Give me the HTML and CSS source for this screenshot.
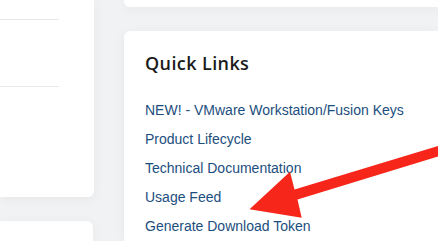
FILE: index.html
```html
<!DOCTYPE html>
<html lang="en">
<head>
    <meta charset="UTF-8">
    <title>Quick Links</title>
    <link rel="stylesheet" href="styles.css">
</head>
<body>
    <div class="page">
        <div class="column left">
            <div class="card card-top-left">
                <div class="rule rule-first"></div>
                <div class="rule rule-second"></div>
            </div>
            <div class="card card-bottom-left"></div>
        </div>
        <div class="column right">
            <div class="card card-top-right"></div>
            <div class="card quick-links">
                <h2>Quick Links</h2>
                <ul class="links">
                    <li><a href="#">NEW! - VMware Workstation/Fusion Keys</a></li>
                    <li><a href="#">Product Lifecycle</a></li>
                    <li><a href="#">Technical Documentation</a></li>
                    <li><a href="#">Usage Feed</a></li>
                    <li><a href="#">Generate Download Token</a></li>
                </ul>
            </div>
        </div>
    </div>

    <!-- annotation arrow drawn over the page -->
    <svg class="arrow" width="438" height="241" viewBox="0 0 438 241">
        <polygon points="440,145.5 440,156 297.5,199.5 301.7,217.7 249.5,209.3 290,171.7 294.5,189.5" fill="#f7261a"/>
    </svg>
</body>
</html>
```

FILE: styles.css
```css
/* Reset */
* {
    margin: 0;
    padding: 0;
    box-sizing: border-box;
}

body {
    background-color: #f1f2f3;
    font-family: 'Liberation Sans', Arial, sans-serif;
    width: 438px;
    height: 241px;
    overflow: hidden;
}

.page {
    display: grid;
    grid-template-columns: 94px 1fr;
    column-gap: 30px;
}

.column {
    display: flex;
    flex-direction: column;
    gap: 24px;
}

.card {
    background-color: #fff;
    box-shadow: 0 2px 12px rgba(0, 0, 0, 0.05);
}

/* Left column */
.card-top-left {
    height: 197px;
    border-radius: 0 0 6px 0;
    padding-top: 19px;
}

.rule {
    width: 59px;
    height: 1px;
    background-color: #e9e9e9;
}

.rule-second {
    margin-top: 66px;
}

.card-bottom-left {
    width: 93px;
    height: 20px;
    border-radius: 0 6px 0 0;
}

/* Right column */
.card-top-right {
    height: 7px;
    border-radius: 0 0 0 6px;
}

.quick-links {
    height: 210px;
    border-radius: 6px 0 0 0;
    padding: 20px 21px 0;
}

.quick-links h2 {
    font-family: 'Open Sans', sans-serif;
    font-size: 18px;
    font-weight: 600;
    letter-spacing: 0.4px;
    color: #1b1b1b;
    line-height: 24px;
    margin-bottom: 21px;
}

.links {
    list-style: none;
}

.links li {
    font-size: 14px;
    line-height: 29px;
}

.links a {
    color: #1c4e7e;
    text-decoration: none;
}

.arrow {
    position: absolute;
    top: 0;
    left: 0;
}
```
